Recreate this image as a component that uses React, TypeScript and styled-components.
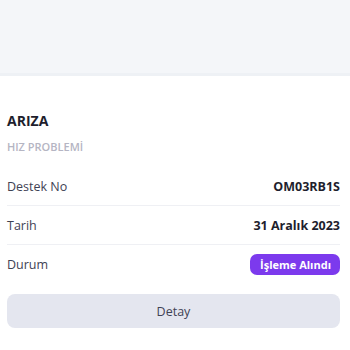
import styled, { createGlobalStyle } from 'styled-components'

const GlobalStyle = createGlobalStyle`
  body {
    margin: 0;
    background: #fff;
    font-family: 'Open Sans', 'Liberation Sans', sans-serif;
  }
`

const TopBar = styled.div`
  height: 73px;
  background-color: #f4f6f9;
  border-bottom: 3px solid #eef1f5;
`

const Card = styled.div`
  padding: 36px 10px 0 7px;
`

const Title = styled.div`
  color: #1e1e2d;
  font-size: 14px;
  font-weight: 700;
  line-height: 18px;
`

const Subtitle = styled.div`
  color: #b5b5c3;
  font-size: 11px;
  font-weight: 600;
  line-height: 14px;
  margin-top: 10px;
  text-transform: uppercase;
`

const Rows = styled.div`
  margin-top: 13px;
`

const Row = styled.div<{ $last?: boolean }>`
  display: flex;
  align-items: center;
  justify-content: space-between;
  height: 38px;
  border-bottom: ${({ $last }) => ($last ? 'none' : '1px solid #eff0f4')};
  font-size: 12.5px;

  .label {
    color: #3f4254;
  }
  .value {
    color: #1e1e2d;
    font-weight: 700;
  }
`

const Badge = styled.span`
  background-color: #7c3aed;
  border-radius: 7px;
  color: #fff;
  font-size: 11px;
  font-weight: 700;
  line-height: 21px;
  padding: 0 9px 0 10px;
`

const DetailButton = styled.button`
  display: block;
  width: 100%;
  height: 34px;
  margin-top: 11px;
  border: none;
  border-radius: 8px;
  background-color: #e4e6ef;
  color: #3f4254;
  font-family: inherit;
  font-size: 12.5px;
  font-weight: 500;
`

export default function App() {
  return (
    <>
      <GlobalStyle />
      <TopBar />
      <Card>
        <Title>ARIZA</Title>
        <Subtitle>HIZ PROBLEMİ</Subtitle>
        <Rows>
          <Row>
            <span className='label'>Destek No</span>
            <span className='value'>OM03RB1S</span>
          </Row>
          <Row>
            <span className='label'>Tarih</span>
            <span className='value'>31 Aralık 2023</span>
          </Row>
          <Row $last>
            <span className='label'>Durum</span>
            <Badge>İşleme Alındı</Badge>
          </Row>
        </Rows>
        <DetailButton>Detay</DetailButton>
      </Card>
    </>
  )
}
